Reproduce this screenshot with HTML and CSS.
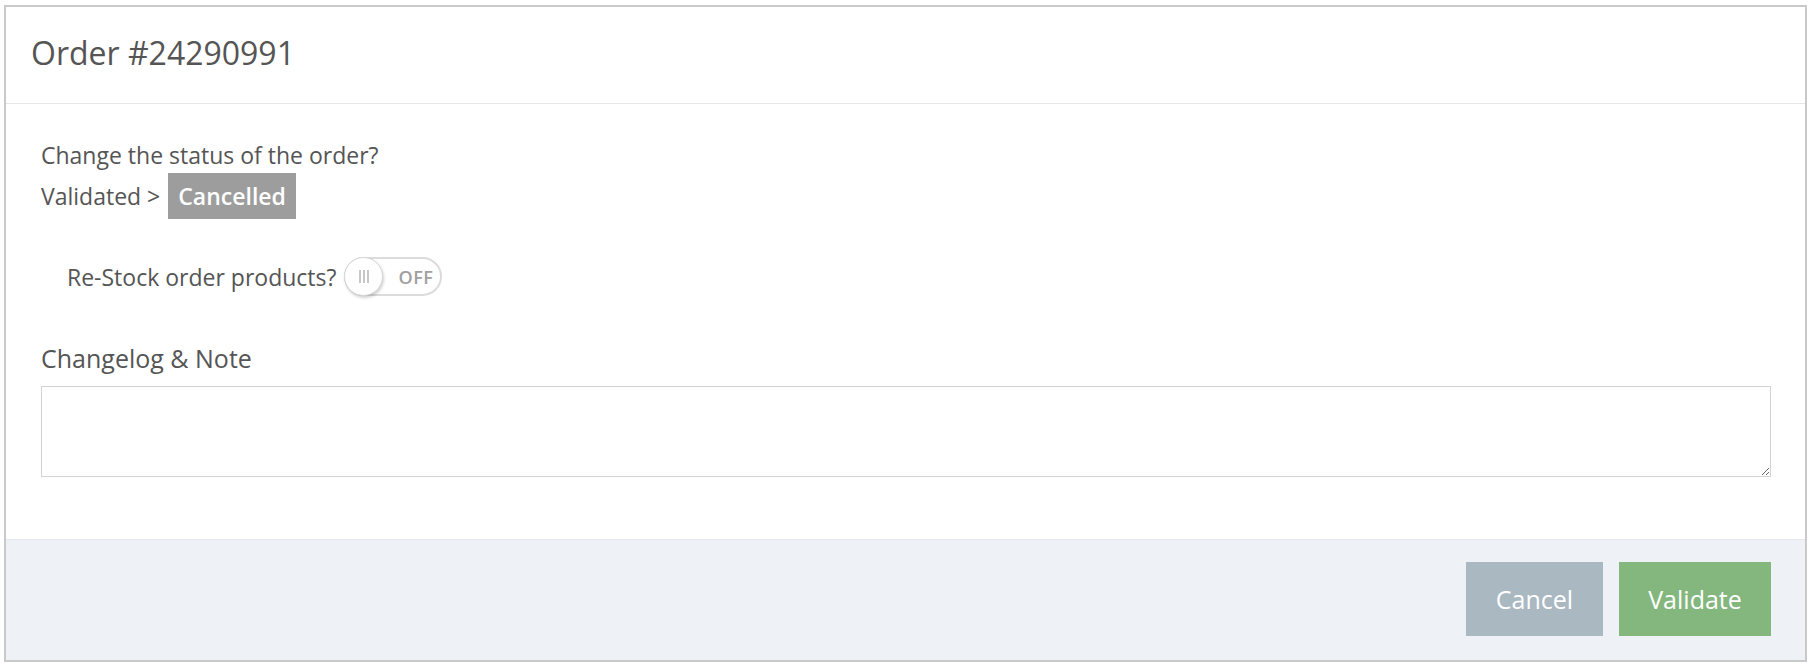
FILE: index.html
```html
<!DOCTYPE html>
<html lang="en">
<head>
<meta charset="utf-8">
<title>Order #24290991</title>
<link rel="stylesheet" href="styles.css">
</head>
<body>
<div class="modal">
  <div class="modal-header">
    <h1 class="modal-title">Order #24290991</h1>
  </div>
  <div class="modal-body">
    <p class="question">Change the status of the order?</p>
    <div class="status-row">
      <span class="status-from">Validated &gt;</span>
      <span class="badge">Cancelled</span>
    </div>
    <div class="restock-row">
      <span class="restock-label">Re-Stock order products?</span>
      <span class="toggle">
        <span class="knob"><span class="grip"></span><span class="grip"></span><span class="grip"></span></span>
        <span class="toggle-text">OFF</span>
      </span>
    </div>
    <label class="note-label" for="note">Changelog &amp; Note</label>
    <textarea id="note" class="note"></textarea>
  </div>
  <div class="modal-footer">
    <button class="btn btn-cancel" type="button">Cancel</button>
    <button class="btn btn-validate" type="button">Validate</button>
  </div>
</div>
</body>
</html>
```

FILE: styles.css
```css
html, body {
  margin: 0;
  padding: 0;
  background: #ffffff;
}

body {
  padding: 5px 6px 7px 4px;
  font-family: "Open Sans", "Noto Sans", sans-serif;
  color: #555555;
}

.modal {
  border: 2px solid #c9c9c9;
  background: #ffffff;
}

.modal-header {
  padding: 25px 25px 29px;
  border-bottom: 1px solid #e6e6e6;
}

.modal-title {
  margin: 0;
  font-size: 32px;
  line-height: 42px;
  font-weight: 400;
  color: #555555;
}

.modal-body {
  padding: 36px 34px 62px 35px;
  display: flex;
  flex-direction: column;
  align-items: flex-start;
}

.question {
  margin: 0;
  font-size: 23px;
  line-height: 30px;
}

.status-row {
  margin-top: 3px;
  display: flex;
  align-items: baseline;
  gap: 8px;
  font-size: 23px;
}

.badge {
  display: inline-block;
  background: #9d9d9d;
  color: #ffffff;
  font-weight: 600;
  font-size: 23px;
  line-height: 46px;
  padding: 0 10px;
}

.restock-row {
  margin-top: 38px;
  margin-left: 26px;
  display: flex;
  align-items: center;
  gap: 8px;
  font-size: 23px;
}

.toggle {
  position: relative;
  display: inline-flex;
  align-items: center;
  justify-content: flex-end;
  box-sizing: border-box;
  width: 98px;
  height: 39px;
  border: 2px solid #dcdcdc;
  border-radius: 20px;
  background: #ffffff;
  padding-right: 7px;
}

.knob {
  position: absolute;
  left: -2px;
  top: -2px;
  box-sizing: border-box;
  width: 39px;
  height: 39px;
  border-radius: 50%;
  background: #ffffff;
  border: 1px solid #d6d6d6;
  box-shadow: 1px 2px 3px rgba(0, 0, 0, 0.18);
  display: flex;
  align-items: center;
  justify-content: center;
  gap: 2px;
}

.grip {
  width: 2px;
  height: 13px;
  background: #c8c8c8;
}

.toggle-text {
  font-size: 18px;
  font-weight: 600;
  color: #a0a0a0;
  letter-spacing: 0.5px;
}

.note-label {
  margin-top: 46px;
  font-size: 25px;
  line-height: 32px;
}

.note {
  margin-top: 12px;
  box-sizing: border-box;
  width: 100%;
  height: 91px;
  border: 1px solid #d3d3d3;
  border-radius: 0;
  font-family: inherit;
  font-size: 18px;
  padding: 8px;
}

.modal-footer {
  background: #eef1f6;
  border-top: 1px solid #e3e7ee;
  padding: 22px 34px 24px;
  display: flex;
  justify-content: flex-end;
  gap: 16px;
}

.btn {
  height: 74px;
  border: none;
  font-family: "Open Sans", "Noto Sans", sans-serif;
  font-size: 25px;
  color: #ffffff;
  cursor: pointer;
}

.btn-cancel {
  width: 137px;
  background: #aab8c2;
}

.btn-validate {
  width: 152px;
  background: #84b77e;
}
```
